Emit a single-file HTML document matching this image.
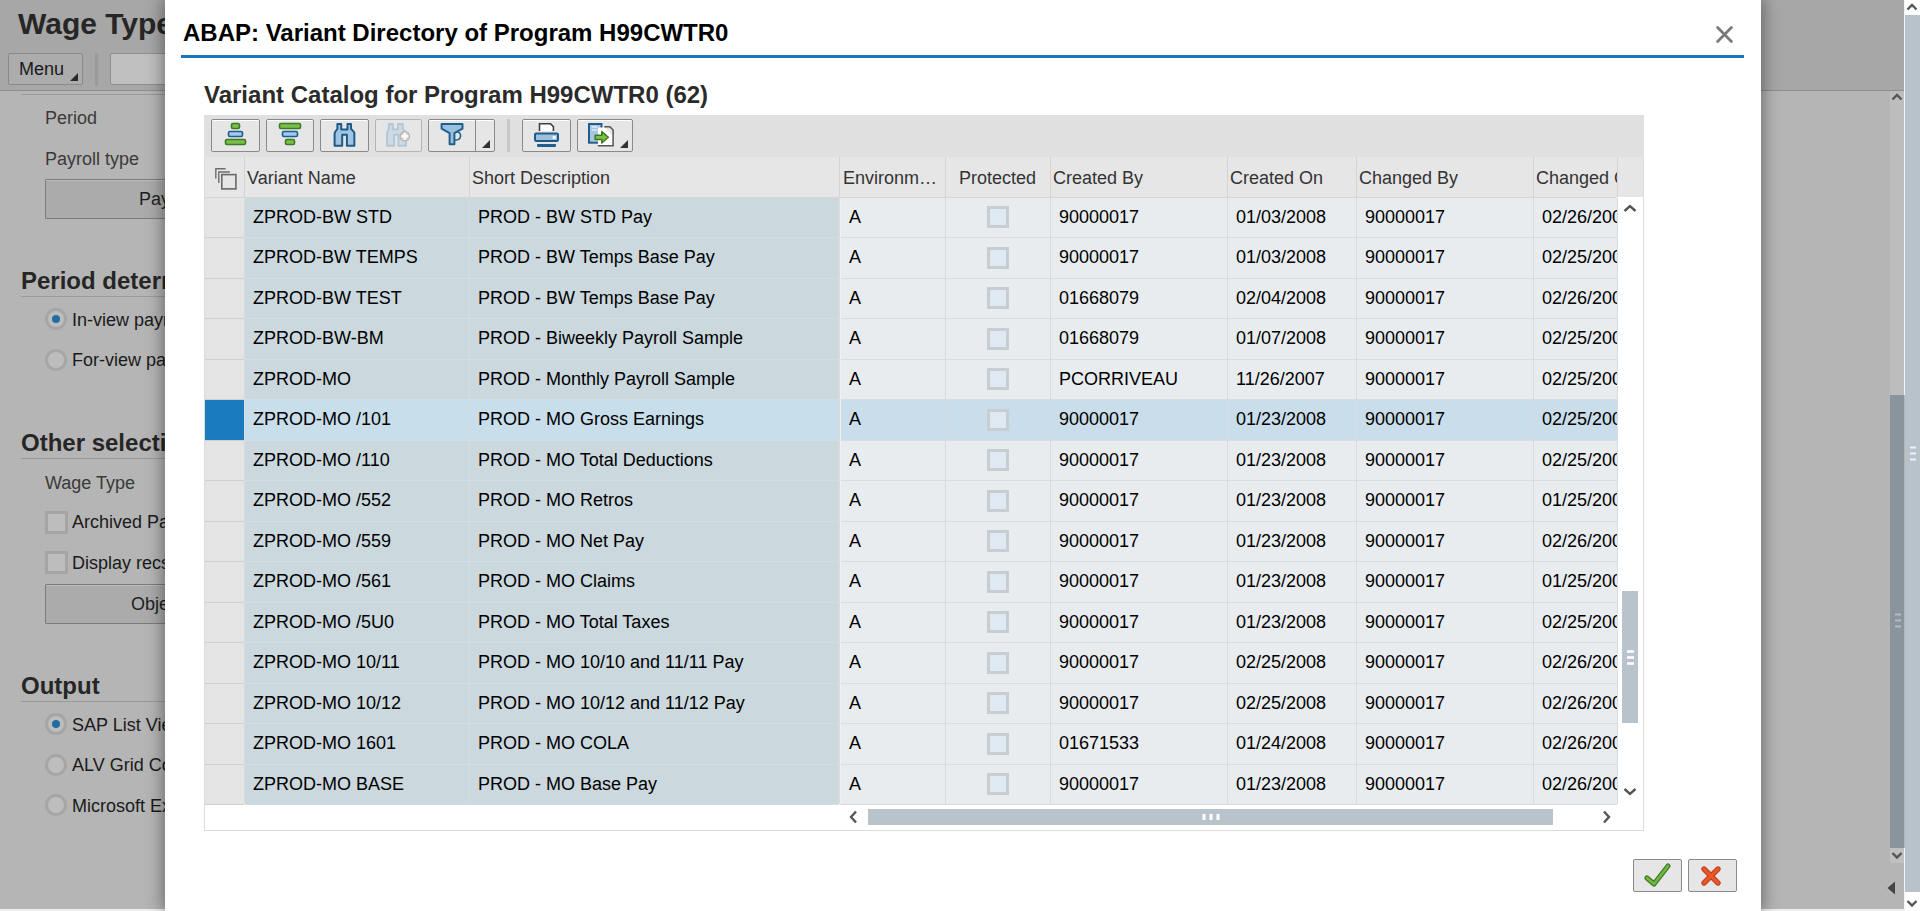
<!DOCTYPE html><html><head><meta charset="utf-8"><style>
*{margin:0;padding:0;box-sizing:border-box}
html,body{width:1920px;height:911px;overflow:hidden;background:#b5b5b5;font-family:"Liberation Sans",sans-serif}
.a{position:absolute}
.t{position:absolute;white-space:nowrap;line-height:20px;font-size:18px}
svg{display:block}
</style></head><body>

<div class="a" style="left:0;top:0;width:1920px;height:90px;background:#a7a7a7"></div>
<div class="a" style="left:0;top:90px;width:1920px;height:1px;background:#8f8f8f"></div>
<div class="t" style="left:18px;top:6px;font-size:30px;line-height:36px;font-weight:bold;color:#262626">Wage Type</div>
<div class="a" style="left:8px;top:53px;width:75px;height:32px;border:1px solid #8a8a8a;border-radius:2px;background:#acacac"></div>
<div class="t" style="left:19px;top:59px;color:#1a1a1a">Menu</div>
<div class="a" style="left:70px;top:73px;width:0;height:0;border-left:8px solid transparent;border-bottom:8px solid #2a2a2a"></div>
<div class="a" style="left:95px;top:53px;width:3px;height:33px;background:#9a9a9a"></div>
<div class="a" style="left:110px;top:53px;width:80px;height:32px;border:1px solid #8f8f8f;border-radius:2px;background:#c0c0c0"></div>
<div class="a" style="left:21px;top:94px;width:160px;height:1px;background:#9a9a9a"></div>
<div class="t" style="left:45px;top:108px;color:#3a3a3a">Period</div>
<div class="t" style="left:45px;top:149px;color:#3a3a3a">Payroll type</div>
<div class="a" style="left:45px;top:179px;width:140px;height:40px;border:1px solid #7c7c7c;border-radius:1px;background:#ababab;box-shadow:inset 0 1px 0 #bcbcbc"></div>
<div class="t" style="left:139px;top:189px;color:#1e1e1e">Payroll</div>
<div class="t" style="left:21px;top:267px;font-size:24px;line-height:28px;font-weight:bold;color:#262626">Period determination</div>
<div class="a" style="left:21px;top:296px;width:160px;height:1px;background:#9a9a9a"></div>
<div class="a" style="left:45px;top:308px;width:22px;height:22px;border-radius:50%;border:3px solid #a6a6a6;background:#bdbdbd"></div><div class="a" style="left:52px;top:315px;width:8px;height:8px;border-radius:50%;background:#1f6fa3"></div>
<div class="t" style="left:72px;top:310px;color:#1a1a1a">In-view payroll</div>
<div class="a" style="left:45px;top:349px;width:22px;height:22px;border-radius:50%;border:3px solid #a6a6a6;background:#bdbdbd"></div>
<div class="t" style="left:72px;top:350px;color:#1a1a1a">For-view payroll</div>
<div class="t" style="left:21px;top:429px;font-size:24px;line-height:28px;font-weight:bold;color:#262626">Other selections</div>
<div class="a" style="left:21px;top:458px;width:160px;height:1px;background:#9a9a9a"></div>
<div class="t" style="left:45px;top:473px;color:#3a3a3a">Wage Type</div>
<div class="a" style="left:45px;top:511px;width:23px;height:23px;border:3px solid #a5a5a5;background:#bdbdbd"></div>
<div class="t" style="left:72px;top:512px;color:#1a1a1a">Archived Payroll</div>
<div class="a" style="left:45px;top:551px;width:23px;height:23px;border:3px solid #a5a5a5;background:#bdbdbd"></div>
<div class="t" style="left:72px;top:553px;color:#1a1a1a">Display recs</div>
<div class="a" style="left:45px;top:584px;width:140px;height:40px;border:1px solid #7c7c7c;border-radius:1px;background:#ababab;box-shadow:inset 0 1px 0 #bcbcbc"></div>
<div class="t" style="left:131px;top:594px;color:#1e1e1e">Objects</div>
<div class="t" style="left:21px;top:672px;font-size:24px;line-height:28px;font-weight:bold;color:#262626">Output</div>
<div class="a" style="left:21px;top:701px;width:160px;height:1px;background:#9a9a9a"></div>
<div class="a" style="left:45px;top:713px;width:22px;height:22px;border-radius:50%;border:3px solid #a6a6a6;background:#bdbdbd"></div><div class="a" style="left:52px;top:720px;width:8px;height:8px;border-radius:50%;background:#1f6fa3"></div>
<div class="t" style="left:72px;top:715px;color:#1a1a1a">SAP List Viewer</div>
<div class="a" style="left:45px;top:754px;width:22px;height:22px;border-radius:50%;border:3px solid #a6a6a6;background:#bdbdbd"></div>
<div class="t" style="left:72px;top:755px;color:#1a1a1a">ALV Grid Control</div>
<div class="a" style="left:45px;top:794px;width:22px;height:22px;border-radius:50%;border:3px solid #a6a6a6;background:#bdbdbd"></div>
<div class="t" style="left:72px;top:796px;color:#1a1a1a">Microsoft Excel</div>
<div class="a" style="left:0;top:909px;width:1905px;height:2px;background:#efefef"></div>
<div class="a" style="left:1904px;top:0;width:1px;height:395px;background:#f4f4f4"></div>
<div class="a" style="left:1904px;top:848px;width:1px;height:63px;background:#f4f4f4"></div>
<div class="a" style="left:1890px;top:91px;width:14px;height:304px;background:#bdbdbd"></div>
<div class="a" style="left:1890px;top:395px;width:14px;height:453px;background:#8a949c"></div>
<div class="a" style="left:1890px;top:848px;width:14px;height:15px;background:#c0c0c0"></div>
<div class="a" style="left:1905px;top:15px;width:15px;height:877px;background:#b8c2cb"></div>
<div class="a" style="left:1905px;top:0;width:15px;height:15px;background:#fff"></div>
<div class="a" style="left:1905px;top:892px;width:15px;height:19px;background:#fff"></div>
<div class="a" style="left:1906px;top:2px"><svg width="12" height="10" viewBox="0 0 12 10" ><path d="M1.5 7.5L6 3L10.5 7.5" fill="none" stroke="#555" stroke-width="2.4"/></svg></div>
<div class="a" style="left:1906px;top:899px"><svg width="12" height="10" viewBox="0 0 12 10" ><path d="M1.5 2L6 6.5L10.5 2" fill="none" stroke="#555" stroke-width="2.4"/></svg></div>
<div class="a" style="left:1891px;top:92px"><svg width="12" height="10" viewBox="0 0 12 10" ><path d="M1.5 7.5L6 3L10.5 7.5" fill="none" stroke="#555" stroke-width="2.4"/></svg></div>
<div class="a" style="left:1891px;top:851px"><svg width="12" height="10" viewBox="0 0 12 10" ><path d="M1.5 2L6 6.5L10.5 2" fill="none" stroke="#555" stroke-width="2.4"/></svg></div>
<div class="a" style="left:1886px;top:880px"><svg width="10" height="16" viewBox="0 0 10 16" ><path d="M9 1.5L1.5 8L9 14.5Z" fill="#444"/></svg></div>
<div class="a" style="left:1910px;top:446px"><svg width="6" height="16" viewBox="0 0 6 16" ><path d="M0 1.5H6M0 7.5H6M0 13.5H6" stroke="#eef1f3" stroke-width="2.2"/></svg></div>
<div class="a" style="left:1895px;top:613px"><svg width="6" height="16" viewBox="0 0 6 16" ><path d="M0 1.5H6M0 7.5H6M0 13.5H6" stroke="#b4bcc2" stroke-width="2.2"/></svg></div>
<div class="a" style="left:165px;top:0;width:1596px;height:911px;background:#fff;box-shadow:0 0 16px 2px rgba(0,0,0,0.42)"></div>
<div class="t" style="left:183px;top:19px;font-size:24px;line-height:28px;font-weight:bold;color:#000">ABAP: Variant Directory of Program H99CWTR0</div>
<div class="a" style="left:1715px;top:25px"><svg width="19" height="19" viewBox="0 0 19 19" ><path d="M2.6 2.6L16.4 16.4M16.4 2.6L2.6 16.4" stroke="#767a7f" stroke-width="2.8" stroke-linecap="round" fill="none"/></svg></div>
<div class="a" style="left:181px;top:55px;width:1563px;height:3px;background:#1a78b8"></div>
<div class="t" style="left:204px;top:81px;font-size:24px;line-height:28px;font-weight:bold;color:#2b2b2b">Variant Catalog for Program H99CWTR0 (62)</div>
<div class="a" style="left:204px;top:115px;width:1440px;height:716px;border:1px solid #dcdcdc;border-top:0;background:#fff"></div>
<div class="a" style="left:204px;top:115px;width:1440px;height:42px;background:#e0e0e0"></div>
<div class="a" style="left:211px;top:119px;width:49px;height:33px;border:1px solid #8a8a8a;border-radius:2px;background:#e6e6e6;box-shadow:inset 0 1px 0 #fff"></div>
<div class="a" style="left:266px;top:119px;width:48px;height:33px;border:1px solid #8a8a8a;border-radius:2px;background:#e6e6e6;box-shadow:inset 0 1px 0 #fff"></div>
<div class="a" style="left:320px;top:119px;width:49px;height:33px;border:1px solid #8a8a8a;border-radius:2px;background:#e6e6e6;box-shadow:inset 0 1px 0 #fff"></div>
<div class="a" style="left:375px;top:119px;width:47px;height:33px;border:1px solid #b4b4b4;border-radius:2px;background:#e6e6e6"></div>
<div class="a" style="left:428px;top:119px;width:67px;height:33px;border:1px solid #8a8a8a;border-radius:2px;background:#e6e6e6;box-shadow:inset 0 1px 0 #fff"></div>
<div class="a" style="left:522px;top:119px;width:49px;height:33px;border:1px solid #8a8a8a;border-radius:2px;background:#e6e6e6;box-shadow:inset 0 1px 0 #fff"></div>
<div class="a" style="left:577px;top:119px;width:56px;height:33px;border:1px solid #8a8a8a;border-radius:2px;background:#e6e6e6;box-shadow:inset 0 1px 0 #fff"></div>
<div class="a" style="left:475px;top:120px;width:1px;height:31px;background:#8a8a8a"></div>
<div class="a" style="left:507px;top:119px;width:3px;height:33px;background:#c8c8c8"></div>
<div class="a" style="left:211px;top:119px"><svg width="49" height="33" viewBox="0 0 49 33" ><rect x="20.5" y="4.5" width="8" height="5" rx="1.5" fill="#7bbf4a" stroke="#3c7a24" stroke-width="1.6"/><rect x="17.5" y="12.5" width="14" height="5" rx="1.5" fill="#a6c8ea" stroke="#1a5f93" stroke-width="1.6"/><rect x="14.5" y="20.5" width="20" height="5" rx="1.5" fill="#7bbf4a" stroke="#3c7a24" stroke-width="1.6"/></svg></div>
<div class="a" style="left:266px;top:119px"><svg width="48" height="33" viewBox="0 0 48 33" ><rect x="13.5" y="4.5" width="21" height="5" rx="1.5" fill="#7bbf4a" stroke="#3c7a24" stroke-width="1.6"/><rect x="16.5" y="12.5" width="15" height="5" rx="1.5" fill="#a6c8ea" stroke="#1a5f93" stroke-width="1.6"/><rect x="19.5" y="20.5" width="9" height="5" rx="1.5" fill="#7bbf4a" stroke="#3c7a24" stroke-width="1.6"/></svg></div>
<div class="a" style="left:320px;top:119px"><svg width="49" height="33" viewBox="0 0 49 33" ><path d="M17.4 5.1H21.2V10.5H27.5V5.1H31V9.5C31 11 34.35 12 34.35 14.5V26.7H26.9V15.8H22.2V26.7H14.6V14.5C14.6 12 17.4 11 17.4 9.5Z" fill="#a0c4e4" stroke="#1f5a86" stroke-width="2" stroke-linejoin="round"/></svg></div>
<div class="a" style="left:375px;top:119px"><svg width="47" height="33" viewBox="0 0 47 33" ><path d="M13.9 5.1H17.8V10.5H23V5.1H27.7V9.5C27.7 11 31 12 31 14.5V26.7H23.4V15.8H19.2V26.7H12.1V14.5C12.1 12 13.9 11 13.9 9.5Z" fill="#cedbe5" stroke="#b5c7d4" stroke-width="2" stroke-linejoin="round"/><circle cx="29.8" cy="17.3" r="4.7" fill="#d2d2d2" stroke="#b2b2b2" stroke-width="1.2"/><path d="M29.8 13.8V20.8M26.3 17.3H33.3" stroke="#fafafa" stroke-width="2.4"/></svg></div>
<div class="a" style="left:428px;top:119px"><svg width="47" height="33" viewBox="0 0 47 33" ><path d="M28.3 12.4A4.3 4.3 0 1 1 27 20.8" fill="none" stroke="#24628a" stroke-width="1.6"/><path d="M13.6 5H34.5V9.7L26.4 14.2V25.2H21.6V14.2L13.6 9.7Z" fill="#9cc0e0" stroke="#22608a" stroke-width="2" stroke-linejoin="round"/></svg></div>
<div class="a" style="left:482px;top:140px;width:0;height:0;border-left:8px solid transparent;border-bottom:8px solid #333"></div>
<div class="a" style="left:522px;top:119px"><svg width="49" height="33" viewBox="0 0 49 33" ><path d="M17.5 12V4.8H28.5L31.4 7.7V12Z" fill="#fff" stroke="none"/><path d="M17.5 12V4.8H28.5L31.4 7.7V12" fill="none" stroke="#404040" stroke-width="1.6"/><rect x="13" y="14.4" width="23" height="7.5" rx="1.2" fill="#9ec0de" stroke="#1b5d87" stroke-width="2"/><rect x="30.7" y="17.1" width="3" height="2.7" fill="#fff"/><path d="M15.1 24.9H33.9V27.2Q33.9 27.9 33.2 27.9H15.8Q15.1 27.9 15.1 27.2Z" fill="#1f5f8b"/></svg></div>
<div class="a" style="left:577px;top:119px"><svg width="56" height="33" viewBox="0 0 56 33" ><rect x="12" y="5" width="12.5" height="18.7" fill="#a8c6e4" stroke="#1f5e8a" stroke-width="2"/><path d="M14.6 7.9H20.2M14.6 11H20.2" stroke="#f2f7fb" stroke-width="1.1"/><path d="M21 8.5H27.3L36 16.2V26.9H21Z" fill="#fff"/><path d="M27.3 7.8H32.9L36.1 11V26.8H20.8" fill="none" stroke="#555" stroke-width="1.5"/><path d="M18.2 16.2H24.8V12.6L31.3 18.3L24.8 24V20.4H18.2Z" fill="#7cc04a" stroke="#3b7a1f" stroke-width="1.5" stroke-linejoin="round"/></svg></div>
<div class="a" style="left:620px;top:140px;width:0;height:0;border-left:8px solid transparent;border-bottom:8px solid #333"></div>
<div class="a" style="left:205px;top:157px;width:1438px;height:40px;background:#e6e6e6"></div>
<div class="a" style="left:205px;top:197px;width:1412px;height:1px;background:#d6d6d6"></div>
<div class="t" style="left:247px;top:168px;color:#333">Variant Name</div>
<div class="t" style="left:472px;top:168px;color:#333">Short Description</div>
<div class="t" style="left:843px;top:168px;color:#333">Environm…</div>
<div class="t" style="left:959px;top:168px;color:#333">Protected</div>
<div class="t" style="left:1053px;top:168px;color:#333">Created By</div>
<div class="t" style="left:1230px;top:168px;color:#333">Created On</div>
<div class="t" style="left:1359px;top:168px;color:#333">Changed By</div>
<div class="t" style="left:1536px;top:168px;color:#333">Changed On</div>
<div class="a" style="left:244px;top:157px;width:1px;height:40px;background:#d4d4d4"></div>
<div class="a" style="left:469px;top:157px;width:1px;height:40px;background:#d4d4d4"></div>
<div class="a" style="left:839px;top:157px;width:1px;height:40px;background:#d4d4d4"></div>
<div class="a" style="left:945px;top:157px;width:1px;height:40px;background:#d4d4d4"></div>
<div class="a" style="left:1050px;top:157px;width:1px;height:40px;background:#d4d4d4"></div>
<div class="a" style="left:1227px;top:157px;width:1px;height:40px;background:#d4d4d4"></div>
<div class="a" style="left:1356px;top:157px;width:1px;height:40px;background:#d4d4d4"></div>
<div class="a" style="left:1533px;top:157px;width:1px;height:40px;background:#d4d4d4"></div>
<div class="a" style="left:1617px;top:157px;width:1px;height:40px;background:#d4d4d4"></div>
<div class="a" style="left:215px;top:167px"><svg width="23" height="23" viewBox="0 0 23 23" ><path d="M0.8 11.6V1.8H10.6M3.8 16V5H14.9" fill="none" stroke="#6e6e6e" stroke-width="1.4"/><rect x="6.8" y="7.6" width="14.1" height="14.3" fill="none" stroke="#686868" stroke-width="1.6"/></svg></div>
<div class="a" style="left:1533px;top:157px;width:84px;height:0px;"></div>
<div class="a" style="left:205px;top:198px;width:39px;height:39px;background:#e5e5e5"></div>
<div class="a" style="left:245px;top:198px;width:594px;height:39px;background:#cbd8de"></div>
<div class="a" style="left:840px;top:198px;width:777px;height:39px;background:#e8ecef"></div>
<div class="a" style="left:205px;top:237px;width:39px;height:1px;background:#d0d0d0"></div>
<div class="a" style="left:245px;top:237px;width:594px;height:1px;background:#d3dee3"></div>
<div class="a" style="left:840px;top:237px;width:777px;height:1px;background:#d8dde1"></div>
<div class="t" style="left:253px;top:207px;color:#000">ZPROD-BW STD</div>
<div class="t" style="left:478px;top:207px;color:#000">PROD - BW STD Pay</div>
<div class="t" style="left:849px;top:207px;color:#000">A</div>
<div class="t" style="left:1059px;top:207px;color:#000">90000017</div>
<div class="t" style="left:1236px;top:207px;color:#000">01/03/2008</div>
<div class="t" style="left:1365px;top:207px;color:#000">90000017</div>
<div class="t" style="left:1542px;top:207px;color:#000">02/26/200</div>
<div class="a" style="left:987px;top:206px;width:22px;height:22px;border:3px solid #c8cdd1;background:#dfe9f3"></div>
<div class="a" style="left:205px;top:238px;width:39px;height:40px;background:#e5e5e5"></div>
<div class="a" style="left:245px;top:238px;width:594px;height:40px;background:#cbd8de"></div>
<div class="a" style="left:840px;top:238px;width:777px;height:40px;background:#e8ecef"></div>
<div class="a" style="left:205px;top:278px;width:39px;height:1px;background:#d0d0d0"></div>
<div class="a" style="left:245px;top:278px;width:594px;height:1px;background:#d3dee3"></div>
<div class="a" style="left:840px;top:278px;width:777px;height:1px;background:#d8dde1"></div>
<div class="t" style="left:253px;top:247px;color:#000">ZPROD-BW TEMPS</div>
<div class="t" style="left:478px;top:247px;color:#000">PROD - BW Temps Base Pay</div>
<div class="t" style="left:849px;top:247px;color:#000">A</div>
<div class="t" style="left:1059px;top:247px;color:#000">90000017</div>
<div class="t" style="left:1236px;top:247px;color:#000">01/03/2008</div>
<div class="t" style="left:1365px;top:247px;color:#000">90000017</div>
<div class="t" style="left:1542px;top:247px;color:#000">02/25/200</div>
<div class="a" style="left:987px;top:247px;width:22px;height:22px;border:3px solid #c8cdd1;background:#dfe9f3"></div>
<div class="a" style="left:205px;top:279px;width:39px;height:39px;background:#e5e5e5"></div>
<div class="a" style="left:245px;top:279px;width:594px;height:39px;background:#cbd8de"></div>
<div class="a" style="left:840px;top:279px;width:777px;height:39px;background:#e8ecef"></div>
<div class="a" style="left:205px;top:318px;width:39px;height:1px;background:#d0d0d0"></div>
<div class="a" style="left:245px;top:318px;width:594px;height:1px;background:#d3dee3"></div>
<div class="a" style="left:840px;top:318px;width:777px;height:1px;background:#d8dde1"></div>
<div class="t" style="left:253px;top:288px;color:#000">ZPROD-BW TEST</div>
<div class="t" style="left:478px;top:288px;color:#000">PROD - BW Temps Base Pay</div>
<div class="t" style="left:849px;top:288px;color:#000">A</div>
<div class="t" style="left:1059px;top:288px;color:#000">01668079</div>
<div class="t" style="left:1236px;top:288px;color:#000">02/04/2008</div>
<div class="t" style="left:1365px;top:288px;color:#000">90000017</div>
<div class="t" style="left:1542px;top:288px;color:#000">02/26/200</div>
<div class="a" style="left:987px;top:287px;width:22px;height:22px;border:3px solid #c8cdd1;background:#dfe9f3"></div>
<div class="a" style="left:205px;top:319px;width:39px;height:40px;background:#e5e5e5"></div>
<div class="a" style="left:245px;top:319px;width:594px;height:40px;background:#cbd8de"></div>
<div class="a" style="left:840px;top:319px;width:777px;height:40px;background:#e8ecef"></div>
<div class="a" style="left:205px;top:359px;width:39px;height:1px;background:#d0d0d0"></div>
<div class="a" style="left:245px;top:359px;width:594px;height:1px;background:#d3dee3"></div>
<div class="a" style="left:840px;top:359px;width:777px;height:1px;background:#d8dde1"></div>
<div class="t" style="left:253px;top:328px;color:#000">ZPROD-BW-BM</div>
<div class="t" style="left:478px;top:328px;color:#000">PROD - Biweekly Payroll Sample</div>
<div class="t" style="left:849px;top:328px;color:#000">A</div>
<div class="t" style="left:1059px;top:328px;color:#000">01668079</div>
<div class="t" style="left:1236px;top:328px;color:#000">01/07/2008</div>
<div class="t" style="left:1365px;top:328px;color:#000">90000017</div>
<div class="t" style="left:1542px;top:328px;color:#000">02/25/200</div>
<div class="a" style="left:987px;top:328px;width:22px;height:22px;border:3px solid #c8cdd1;background:#dfe9f3"></div>
<div class="a" style="left:205px;top:360px;width:39px;height:39px;background:#e5e5e5"></div>
<div class="a" style="left:245px;top:360px;width:594px;height:39px;background:#cbd8de"></div>
<div class="a" style="left:840px;top:360px;width:777px;height:39px;background:#e8ecef"></div>
<div class="a" style="left:205px;top:399px;width:39px;height:1px;background:#d0d0d0"></div>
<div class="a" style="left:245px;top:399px;width:594px;height:1px;background:#d3dee3"></div>
<div class="a" style="left:840px;top:399px;width:777px;height:1px;background:#d8dde1"></div>
<div class="t" style="left:253px;top:369px;color:#000">ZPROD-MO</div>
<div class="t" style="left:478px;top:369px;color:#000">PROD - Monthly Payroll Sample</div>
<div class="t" style="left:849px;top:369px;color:#000">A</div>
<div class="t" style="left:1059px;top:369px;color:#000">PCORRIVEAU</div>
<div class="t" style="left:1236px;top:369px;color:#000">11/26/2007</div>
<div class="t" style="left:1365px;top:369px;color:#000">90000017</div>
<div class="t" style="left:1542px;top:369px;color:#000">02/25/200</div>
<div class="a" style="left:987px;top:368px;width:22px;height:22px;border:3px solid #c8cdd1;background:#dfe9f3"></div>
<div class="a" style="left:205px;top:400px;width:39px;height:40px;background:#1a7bbd"></div>
<div class="a" style="left:245px;top:400px;width:594px;height:40px;background:#c8deea"></div>
<div class="a" style="left:840px;top:400px;width:777px;height:40px;background:#c9ddea"></div>
<div class="a" style="left:205px;top:440px;width:39px;height:1px;background:#d0d0d0"></div>
<div class="a" style="left:245px;top:440px;width:594px;height:1px;background:#d3dee3"></div>
<div class="a" style="left:840px;top:440px;width:777px;height:1px;background:#d8dde1"></div>
<div class="t" style="left:253px;top:409px;color:#000">ZPROD-MO /101</div>
<div class="t" style="left:478px;top:409px;color:#000">PROD - MO Gross Earnings</div>
<div class="t" style="left:849px;top:409px;color:#000">A</div>
<div class="t" style="left:1059px;top:409px;color:#000">90000017</div>
<div class="t" style="left:1236px;top:409px;color:#000">01/23/2008</div>
<div class="t" style="left:1365px;top:409px;color:#000">90000017</div>
<div class="t" style="left:1542px;top:409px;color:#000">02/25/200</div>
<div class="a" style="left:987px;top:409px;width:22px;height:22px;border:3px solid #c8cdd1;background:#dfe9f3"></div>
<div class="a" style="left:205px;top:441px;width:39px;height:39px;background:#e5e5e5"></div>
<div class="a" style="left:245px;top:441px;width:594px;height:39px;background:#cbd8de"></div>
<div class="a" style="left:840px;top:441px;width:777px;height:39px;background:#e8ecef"></div>
<div class="a" style="left:205px;top:480px;width:39px;height:1px;background:#d0d0d0"></div>
<div class="a" style="left:245px;top:480px;width:594px;height:1px;background:#d3dee3"></div>
<div class="a" style="left:840px;top:480px;width:777px;height:1px;background:#d8dde1"></div>
<div class="t" style="left:253px;top:450px;color:#000">ZPROD-MO /110</div>
<div class="t" style="left:478px;top:450px;color:#000">PROD - MO Total Deductions</div>
<div class="t" style="left:849px;top:450px;color:#000">A</div>
<div class="t" style="left:1059px;top:450px;color:#000">90000017</div>
<div class="t" style="left:1236px;top:450px;color:#000">01/23/2008</div>
<div class="t" style="left:1365px;top:450px;color:#000">90000017</div>
<div class="t" style="left:1542px;top:450px;color:#000">02/25/200</div>
<div class="a" style="left:987px;top:449px;width:22px;height:22px;border:3px solid #c8cdd1;background:#dfe9f3"></div>
<div class="a" style="left:205px;top:481px;width:39px;height:40px;background:#e5e5e5"></div>
<div class="a" style="left:245px;top:481px;width:594px;height:40px;background:#cbd8de"></div>
<div class="a" style="left:840px;top:481px;width:777px;height:40px;background:#e8ecef"></div>
<div class="a" style="left:205px;top:521px;width:39px;height:1px;background:#d0d0d0"></div>
<div class="a" style="left:245px;top:521px;width:594px;height:1px;background:#d3dee3"></div>
<div class="a" style="left:840px;top:521px;width:777px;height:1px;background:#d8dde1"></div>
<div class="t" style="left:253px;top:490px;color:#000">ZPROD-MO /552</div>
<div class="t" style="left:478px;top:490px;color:#000">PROD - MO Retros</div>
<div class="t" style="left:849px;top:490px;color:#000">A</div>
<div class="t" style="left:1059px;top:490px;color:#000">90000017</div>
<div class="t" style="left:1236px;top:490px;color:#000">01/23/2008</div>
<div class="t" style="left:1365px;top:490px;color:#000">90000017</div>
<div class="t" style="left:1542px;top:490px;color:#000">01/25/200</div>
<div class="a" style="left:987px;top:490px;width:22px;height:22px;border:3px solid #c8cdd1;background:#dfe9f3"></div>
<div class="a" style="left:205px;top:522px;width:39px;height:39px;background:#e5e5e5"></div>
<div class="a" style="left:245px;top:522px;width:594px;height:39px;background:#cbd8de"></div>
<div class="a" style="left:840px;top:522px;width:777px;height:39px;background:#e8ecef"></div>
<div class="a" style="left:205px;top:561px;width:39px;height:1px;background:#d0d0d0"></div>
<div class="a" style="left:245px;top:561px;width:594px;height:1px;background:#d3dee3"></div>
<div class="a" style="left:840px;top:561px;width:777px;height:1px;background:#d8dde1"></div>
<div class="t" style="left:253px;top:531px;color:#000">ZPROD-MO /559</div>
<div class="t" style="left:478px;top:531px;color:#000">PROD - MO Net Pay</div>
<div class="t" style="left:849px;top:531px;color:#000">A</div>
<div class="t" style="left:1059px;top:531px;color:#000">90000017</div>
<div class="t" style="left:1236px;top:531px;color:#000">01/23/2008</div>
<div class="t" style="left:1365px;top:531px;color:#000">90000017</div>
<div class="t" style="left:1542px;top:531px;color:#000">02/26/200</div>
<div class="a" style="left:987px;top:530px;width:22px;height:22px;border:3px solid #c8cdd1;background:#dfe9f3"></div>
<div class="a" style="left:205px;top:562px;width:39px;height:40px;background:#e5e5e5"></div>
<div class="a" style="left:245px;top:562px;width:594px;height:40px;background:#cbd8de"></div>
<div class="a" style="left:840px;top:562px;width:777px;height:40px;background:#e8ecef"></div>
<div class="a" style="left:205px;top:602px;width:39px;height:1px;background:#d0d0d0"></div>
<div class="a" style="left:245px;top:602px;width:594px;height:1px;background:#d3dee3"></div>
<div class="a" style="left:840px;top:602px;width:777px;height:1px;background:#d8dde1"></div>
<div class="t" style="left:253px;top:571px;color:#000">ZPROD-MO /561</div>
<div class="t" style="left:478px;top:571px;color:#000">PROD - MO Claims</div>
<div class="t" style="left:849px;top:571px;color:#000">A</div>
<div class="t" style="left:1059px;top:571px;color:#000">90000017</div>
<div class="t" style="left:1236px;top:571px;color:#000">01/23/2008</div>
<div class="t" style="left:1365px;top:571px;color:#000">90000017</div>
<div class="t" style="left:1542px;top:571px;color:#000">01/25/200</div>
<div class="a" style="left:987px;top:571px;width:22px;height:22px;border:3px solid #c8cdd1;background:#dfe9f3"></div>
<div class="a" style="left:205px;top:603px;width:39px;height:39px;background:#e5e5e5"></div>
<div class="a" style="left:245px;top:603px;width:594px;height:39px;background:#cbd8de"></div>
<div class="a" style="left:840px;top:603px;width:777px;height:39px;background:#e8ecef"></div>
<div class="a" style="left:205px;top:642px;width:39px;height:1px;background:#d0d0d0"></div>
<div class="a" style="left:245px;top:642px;width:594px;height:1px;background:#d3dee3"></div>
<div class="a" style="left:840px;top:642px;width:777px;height:1px;background:#d8dde1"></div>
<div class="t" style="left:253px;top:612px;color:#000">ZPROD-MO /5U0</div>
<div class="t" style="left:478px;top:612px;color:#000">PROD - MO Total Taxes</div>
<div class="t" style="left:849px;top:612px;color:#000">A</div>
<div class="t" style="left:1059px;top:612px;color:#000">90000017</div>
<div class="t" style="left:1236px;top:612px;color:#000">01/23/2008</div>
<div class="t" style="left:1365px;top:612px;color:#000">90000017</div>
<div class="t" style="left:1542px;top:612px;color:#000">02/25/200</div>
<div class="a" style="left:987px;top:611px;width:22px;height:22px;border:3px solid #c8cdd1;background:#dfe9f3"></div>
<div class="a" style="left:205px;top:643px;width:39px;height:40px;background:#e5e5e5"></div>
<div class="a" style="left:245px;top:643px;width:594px;height:40px;background:#cbd8de"></div>
<div class="a" style="left:840px;top:643px;width:777px;height:40px;background:#e8ecef"></div>
<div class="a" style="left:205px;top:683px;width:39px;height:1px;background:#d0d0d0"></div>
<div class="a" style="left:245px;top:683px;width:594px;height:1px;background:#d3dee3"></div>
<div class="a" style="left:840px;top:683px;width:777px;height:1px;background:#d8dde1"></div>
<div class="t" style="left:253px;top:652px;color:#000">ZPROD-MO 10/11</div>
<div class="t" style="left:478px;top:652px;color:#000">PROD - MO 10/10 and 11/11 Pay</div>
<div class="t" style="left:849px;top:652px;color:#000">A</div>
<div class="t" style="left:1059px;top:652px;color:#000">90000017</div>
<div class="t" style="left:1236px;top:652px;color:#000">02/25/2008</div>
<div class="t" style="left:1365px;top:652px;color:#000">90000017</div>
<div class="t" style="left:1542px;top:652px;color:#000">02/26/200</div>
<div class="a" style="left:987px;top:652px;width:22px;height:22px;border:3px solid #c8cdd1;background:#dfe9f3"></div>
<div class="a" style="left:205px;top:684px;width:39px;height:39px;background:#e5e5e5"></div>
<div class="a" style="left:245px;top:684px;width:594px;height:39px;background:#cbd8de"></div>
<div class="a" style="left:840px;top:684px;width:777px;height:39px;background:#e8ecef"></div>
<div class="a" style="left:205px;top:723px;width:39px;height:1px;background:#d0d0d0"></div>
<div class="a" style="left:245px;top:723px;width:594px;height:1px;background:#d3dee3"></div>
<div class="a" style="left:840px;top:723px;width:777px;height:1px;background:#d8dde1"></div>
<div class="t" style="left:253px;top:693px;color:#000">ZPROD-MO 10/12</div>
<div class="t" style="left:478px;top:693px;color:#000">PROD - MO 10/12 and 11/12 Pay</div>
<div class="t" style="left:849px;top:693px;color:#000">A</div>
<div class="t" style="left:1059px;top:693px;color:#000">90000017</div>
<div class="t" style="left:1236px;top:693px;color:#000">02/25/2008</div>
<div class="t" style="left:1365px;top:693px;color:#000">90000017</div>
<div class="t" style="left:1542px;top:693px;color:#000">02/26/200</div>
<div class="a" style="left:987px;top:692px;width:22px;height:22px;border:3px solid #c8cdd1;background:#dfe9f3"></div>
<div class="a" style="left:205px;top:724px;width:39px;height:40px;background:#e5e5e5"></div>
<div class="a" style="left:245px;top:724px;width:594px;height:40px;background:#cbd8de"></div>
<div class="a" style="left:840px;top:724px;width:777px;height:40px;background:#e8ecef"></div>
<div class="a" style="left:205px;top:764px;width:39px;height:1px;background:#d0d0d0"></div>
<div class="a" style="left:245px;top:764px;width:594px;height:1px;background:#d3dee3"></div>
<div class="a" style="left:840px;top:764px;width:777px;height:1px;background:#d8dde1"></div>
<div class="t" style="left:253px;top:733px;color:#000">ZPROD-MO 1601</div>
<div class="t" style="left:478px;top:733px;color:#000">PROD - MO COLA</div>
<div class="t" style="left:849px;top:733px;color:#000">A</div>
<div class="t" style="left:1059px;top:733px;color:#000">01671533</div>
<div class="t" style="left:1236px;top:733px;color:#000">01/24/2008</div>
<div class="t" style="left:1365px;top:733px;color:#000">90000017</div>
<div class="t" style="left:1542px;top:733px;color:#000">02/26/200</div>
<div class="a" style="left:987px;top:733px;width:22px;height:22px;border:3px solid #c8cdd1;background:#dfe9f3"></div>
<div class="a" style="left:205px;top:765px;width:39px;height:39px;background:#e5e5e5"></div>
<div class="a" style="left:245px;top:765px;width:594px;height:39px;background:#cbd8de"></div>
<div class="a" style="left:840px;top:765px;width:777px;height:39px;background:#e8ecef"></div>
<div class="a" style="left:205px;top:804px;width:39px;height:1px;background:#d0d0d0"></div>
<div class="a" style="left:245px;top:804px;width:594px;height:1px;background:#d3dee3"></div>
<div class="a" style="left:840px;top:804px;width:777px;height:1px;background:#d8dde1"></div>
<div class="t" style="left:253px;top:774px;color:#000">ZPROD-MO BASE</div>
<div class="t" style="left:478px;top:774px;color:#000">PROD - MO Base Pay</div>
<div class="t" style="left:849px;top:774px;color:#000">A</div>
<div class="t" style="left:1059px;top:774px;color:#000">90000017</div>
<div class="t" style="left:1236px;top:774px;color:#000">01/23/2008</div>
<div class="t" style="left:1365px;top:774px;color:#000">90000017</div>
<div class="t" style="left:1542px;top:774px;color:#000">02/26/200</div>
<div class="a" style="left:987px;top:773px;width:22px;height:22px;border:3px solid #c8cdd1;background:#dfe9f3"></div>
<div class="a" style="left:244px;top:198px;width:1px;height:606px;background:#d5dde2"></div>
<div class="a" style="left:469px;top:198px;width:1px;height:606px;background:#d5dde2"></div>
<div class="a" style="left:839px;top:198px;width:1px;height:606px;background:#d5dde2"></div>
<div class="a" style="left:945px;top:198px;width:1px;height:606px;background:#d5dde2"></div>
<div class="a" style="left:1050px;top:198px;width:1px;height:606px;background:#d5dde2"></div>
<div class="a" style="left:1227px;top:198px;width:1px;height:606px;background:#d5dde2"></div>
<div class="a" style="left:1356px;top:198px;width:1px;height:606px;background:#d5dde2"></div>
<div class="a" style="left:1533px;top:198px;width:1px;height:606px;background:#d5dde2"></div>
<div class="a" style="left:1617px;top:198px;width:1px;height:606px;background:#d5dde2"></div>
<div class="a" style="left:1618px;top:157px;width:25px;height:40px;background:#e6e6e6"></div>
<div class="a" style="left:1618px;top:198px;width:25px;height:607px;background:#fff"></div>
<div class="a" style="left:1617px;top:157px;width:1px;height:40px;background:#d4d4d4"></div>
<div class="a" style="left:838px;top:198px;width:2px;height:606px;background:#dadada"></div>
<div class="a" style="left:840px;top:198px;width:1px;height:606px;background:#eef0f2"></div>
<div class="a" style="left:1622px;top:591px;width:16px;height:132px;background:#b9c3cc"></div>
<div class="a" style="left:1627px;top:650px"><svg width="7" height="16" viewBox="0 0 7 16" ><path d="M0 1.5H7M0 7.5H7M0 13.5H7" stroke="#fff" stroke-width="2.6"/></svg></div>
<div class="a" style="left:1623px;top:203px"><svg width="14" height="10" viewBox="0 0 14 10" ><path d="M1.5 8L7 3L12.5 8" fill="none" stroke="#555" stroke-width="2.4"/></svg></div>
<div class="a" style="left:1623px;top:787px"><svg width="14" height="10" viewBox="0 0 14 10" ><path d="M1.5 2L7 7L12.5 2" fill="none" stroke="#555" stroke-width="2.4"/></svg></div>
<div class="a" style="left:868px;top:809px;width:685px;height:16px;background:#b9c3cc"></div>
<div class="a" style="left:1202px;top:814px"><svg width="18" height="6" viewBox="0 0 18 6" ><path d="M2 0V6M9 0V6M16 0V6" stroke="#fff" stroke-width="3"/></svg></div>
<div class="a" style="left:848px;top:810px"><svg width="11" height="14" viewBox="0 0 11 14" ><path d="M8 1.5L3 7L8 12.5" fill="none" stroke="#555" stroke-width="2.4"/></svg></div>
<div class="a" style="left:1601px;top:810px"><svg width="11" height="14" viewBox="0 0 11 14" ><path d="M3 1.5L8 7L3 12.5" fill="none" stroke="#555" stroke-width="2.4"/></svg></div>
<div class="a" style="left:1633px;top:859px;width:49px;height:33px;border:1px solid #8a8a8a;border-radius:2px;background:#e6e6e6"></div>
<div class="a" style="left:1688px;top:859px;width:49px;height:33px;border:1px solid #8a8a8a;border-radius:2px;background:#e6e6e6"></div>
<div class="a" style="left:1644px;top:862px"><svg width="27" height="26" viewBox="0 0 27 26" ><path d="M3 16L10 22L24 4" fill="none" stroke="#3d7a26" stroke-width="5" stroke-linecap="round" stroke-linejoin="round"/><path d="M3 16L10 22L24 4" fill="none" stroke="#72b843" stroke-width="2.6" stroke-linecap="round" stroke-linejoin="round"/></svg></div>
<div class="a" style="left:1700px;top:865px"><svg width="22" height="22" viewBox="0 0 22 22" ><path d="M4 4L18 18M18 4L4 18" fill="none" stroke="#c4431c" stroke-width="5.4" stroke-linecap="round"/><path d="M4 4L18 18M18 4L4 18" fill="none" stroke="#e8582a" stroke-width="3" stroke-linecap="round"/></svg></div>
</body></html>
